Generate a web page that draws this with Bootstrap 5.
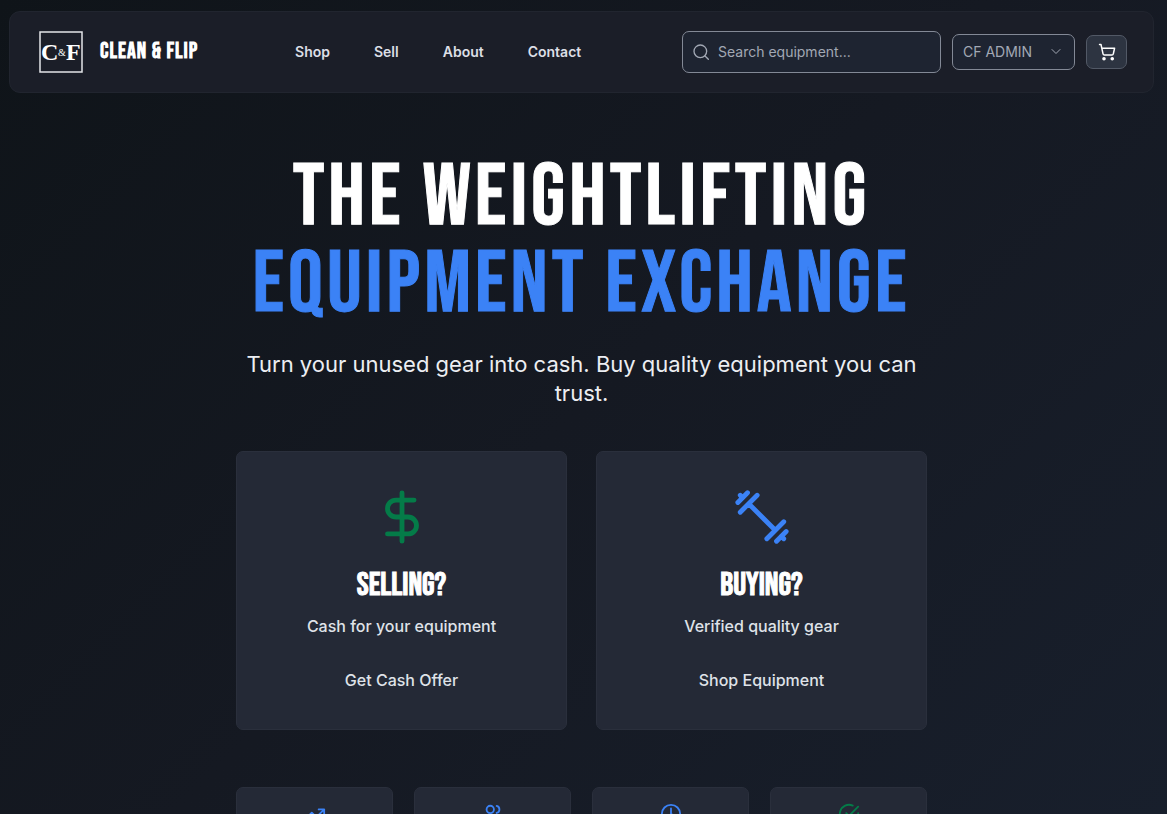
<!DOCTYPE html>
<html lang="en">
<head>
<meta charset="utf-8">
<meta name="viewport" content="width=device-width, initial-scale=1">
<title>Clean &amp; Flip</title>
<link href="https://cdn.jsdelivr.net/npm/bootstrap@5.3.0/dist/css/bootstrap.min.css" rel="stylesheet">
<script src="https://cdn.jsdelivr.net/npm/bootstrap@5.3.0/dist/js/bootstrap.bundle.min.js" defer></script>
<style>
  body { font-family: Inter, "Liberation Sans", sans-serif; color: #fff; padding-right: 4px;
    background: linear-gradient(135deg, #0f1419 0%, #151922 50%, #181f2c 100%) fixed; }
  a { text-decoration: none; }
  svg { display: block; flex: none; }
  .display-face { font-family: "Bebas Neue", "Liberation Sans Narrow", "Liberation Sans", sans-serif; font-weight: 400; }
  .site-bar { margin: 11px 9px 0; padding: 19px 26px 19px 29px; background: #1b1e28; border: 1px solid #21252f; border-radius: 11px; }
  .site-bar .navbar-brand { gap: 17px; margin: 0; padding: 0; color: #fff; font-size: 22px; line-height: 24px; letter-spacing: 1px; }
  .brand-name { font-weight: 700; }
  .site-links { gap: 44px; padding-right: 4px; }
  .site-links .nav-link { padding: 0 0 2px; color: #dcdfe6; font-size: 14px; font-weight: 600; }
  .tools { gap: 11px; }
  .search-box { width: 259px; height: 42px; padding: 0 10px; gap: 9px; background: #1e2431; border: 1px solid #838996; border-radius: 7px; color: #a2a8b4; }
  .search-box input { background: none; border: 0; outline: 0; padding: 0 0 2px; min-width: 0; font-size: 14px; color: #fff; }
  .search-box input::placeholder { color: #a2a8b4; opacity: 1; }
  .btn-account { width: 123px; height: 36px; padding: 0 12px 2px 10px; background: #1e2431; border: 1px solid #838996; border-radius: 7px; color: #a2a8b4; font-size: 14px; }
  .btn-cart { width: 41px; height: 34px; padding: 0; background: #2d3441; border: 1px solid #525966; border-radius: 7px; color: #fff; }
  .hero { max-width: 691px; margin: 62px auto 0; }
  .hero h1 { font-size: 87px; line-height: 87px; letter-spacing: 4px; margin: 0; white-space: nowrap; -webkit-text-stroke: 1px currentColor; }
  .accent { color: #3b82f6; -webkit-text-stroke-color: #3b82f6; }
  .good { color: #047b48; }
  .hero-lead { font-size: 22px; line-height: 29px; margin: 21px 0 43px; color: #eceef2; }
  .choices { gap: 29px; }
  .panel { background: #242936; border: 1px solid #2a2f3c; border-radius: 7px; flex: 1 1 0; }
  .choice { padding: 36px 28px; }
  .choice h2 { font-size: 32px; line-height: 36px; margin: 22px 0 9px; -webkit-text-stroke: 1px currentColor; }
  .choice p, .choice a { font-size: 16px; line-height: 26px; font-weight: 500; color: #dfe2e8; }
  .choice p { margin-bottom: 28px; }
  .facts { gap: 21px; margin-top: 57px; }
  .fact { padding: 15px 15px 50px; }
</style>
</head>
<body class="vh-100 overflow-hidden">
<header>
  <nav class="navbar site-bar d-flex flex-nowrap justify-content-between align-items-center">
    <a class="navbar-brand d-flex align-items-center display-face" href="#">
      <svg width="44" height="42" viewBox="0 0 44 42" fill="#fff" font-family="'Liberation Serif',serif" font-weight="700" letter-spacing="0" aria-hidden="true">
        <rect x="1" y="1" width="42" height="40" fill="none" stroke="#e4e5e8" stroke-width="1.5"/>
        <text x="2" y="29" font-size="24">C</text>
        <text x="27" y="29" font-size="24">F</text>
        <text x="19" y="25" font-size="10" font-weight="400">&amp;</text>
      </svg>
      <span class="brand-name">CLEAN &amp; FLIP</span>
    </a>
    <ul class="nav site-links flex-nowrap">
      <li class="nav-item"><a class="nav-link" href="#">Shop</a></li>
      <li class="nav-item"><a class="nav-link" href="#">Sell</a></li>
      <li class="nav-item"><a class="nav-link" href="#">About</a></li>
      <li class="nav-item"><a class="nav-link" href="#">Contact</a></li>
    </ul>
    <div class="tools d-flex align-items-center">
      <label class="search-box d-flex align-items-center">
        <svg width="16" height="16" viewBox="0 0 24 24" fill="none" stroke="currentColor" stroke-width="2" stroke-linecap="round"><circle cx="11" cy="11" r="9.5"/><path d="m18 18 5 5"/></svg>
        <input class="flex-grow-1" type="search" placeholder="Search equipment..." aria-label="Search equipment">
      </label>
      <button class="btn btn-account d-flex align-items-center justify-content-between" type="button">CF ADMIN
        <svg width="12" height="12" viewBox="0 0 24 24" fill="none" stroke="currentColor" stroke-width="2" stroke-linecap="round" stroke-linejoin="round"><path d="m4 9 8 8 8-8"/></svg>
      </button>
      <button class="btn btn-cart d-flex align-items-center justify-content-center" type="button" aria-label="Cart">
        <svg width="18" height="18" viewBox="0 0 24 24" fill="none" stroke="currentColor" stroke-width="2" stroke-linecap="round" stroke-linejoin="round"><circle cx="8" cy="21" r="1.4" fill="currentColor"/><circle cx="19" cy="21" r="1.4" fill="currentColor"/><path d="M2.05 2.05h2l2.66 12.42a2 2 0 0 0 2 1.58h9.78a2 2 0 0 0 1.95-1.57l1.65-7.43H5.12"/></svg>
      </button>
    </div>
  </nav>
</header>
<main class="hero text-center">
  <h1 class="display-face">THE WEIGHTLIFTING<br><span class="accent">EQUIPMENT EXCHANGE</span></h1>
  <p class="hero-lead">Turn your unused gear into cash. Buy quality equipment you can trust.</p>
  <section class="choices d-flex">
    <article class="panel choice">
      <svg class="mx-auto good" width="58" height="58" viewBox="0 0 24 24" fill="none" stroke="currentColor" stroke-width="2" stroke-linecap="round" stroke-linejoin="round"><path d="M12 2v20M17 5H9.500a3.500 3.500 0 0 0 0 7h5a3.500 3.500 0 0 1 0 7H6"/></svg>
      <h2 class="display-face">SELLING?</h2>
      <p>Cash for your equipment</p>
      <a href="#">Get Cash Offer</a>
    </article>
    <article class="panel choice">
      <svg class="mx-auto accent" width="58" height="58" viewBox="0 0 24 24" fill="none" stroke="currentColor" stroke-width="2" stroke-linecap="round" stroke-linejoin="round"><path d="m6.500 6.500 11 11M21 21l-1-1M3 3l1 1M18 22l4-4M2 6l4-4M3 10l7-7M14 21l7-7"/></svg>
      <h2 class="display-face">BUYING?</h2>
      <p>Verified quality gear</p>
      <a href="#">Shop Equipment</a>
    </article>
  </section>
  <section class="facts d-flex">
    <div class="panel fact"><svg class="mx-auto accent" width="22" height="22" viewBox="0 0 24 24" fill="none" stroke="currentColor" stroke-width="2" stroke-linecap="round" stroke-linejoin="round"><path d="m22 7-8.500 8.500-5-5L2 17M16 7h6v6"/></svg></div>
    <div class="panel fact"><svg class="mx-auto accent" width="22" height="22" viewBox="0 0 24 24" fill="none" stroke="currentColor" stroke-width="2" stroke-linecap="round" stroke-linejoin="round"><path d="M16 21v-2a4 4 0 0 0-4-4H6a4 4 0 0 0-4 4v2M22 21v-2a4 4 0 0 0-3-3.870M16 3.130a4 4 0 0 1 0 7.750"/><circle cx="9" cy="7" r="4"/></svg></div>
    <div class="panel fact"><svg class="mx-auto accent" width="22" height="22" viewBox="0 0 24 24" fill="none" stroke="currentColor" stroke-width="2" stroke-linecap="round" stroke-linejoin="round"><circle cx="12" cy="12" r="10"/><path d="M12 6v6l4 2"/></svg></div>
    <div class="panel fact"><svg class="mx-auto good" width="22" height="22" viewBox="0 0 24 24" fill="none" stroke="currentColor" stroke-width="2" stroke-linecap="round" stroke-linejoin="round"><path d="M22 11.080V12a10 10 0 1 1-5.930-9.140M22 4 12 14.010l-3-3"/></svg></div>
  </section>
</main>
</body>
</html>
